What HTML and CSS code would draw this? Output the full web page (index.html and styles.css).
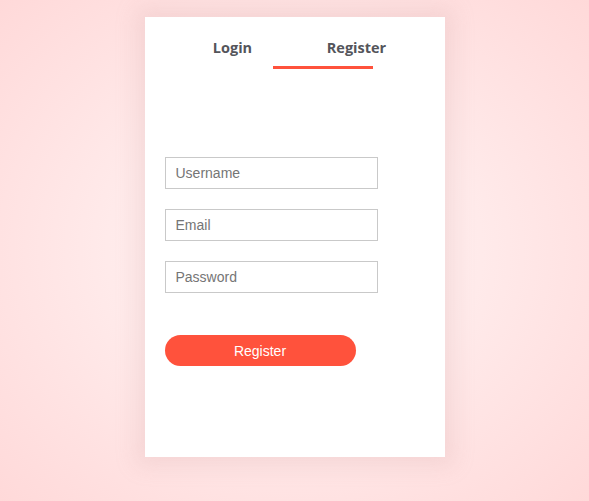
FILE: index.html
```html
<!DOCTYPE html>
<html>
<head>
<meta charset="utf-8">
<link rel="stylesheet" href="styles.css">
</head>
<body>
<div class="card">
  <div class="tabs">
    <div class="tab">Login</div>
    <div class="tab">Register</div>
  </div>
  <div class="indicator-row"><div class="indicator"></div></div>
  <form class="form">
    <input class="field" type="text" placeholder="Username">
    <input class="field" type="email" placeholder="Email">
    <input class="field" type="password" placeholder="Password">
    <button class="submit" type="button">Register</button>
  </form>
</div>
</body>
</html>
```
FILE: styles.css
```css
html, body { height: 100%; }
body {
  margin: 0;
  background: radial-gradient(ellipse at 50% 50%, #fff3f3 0%, #ffeaea 45%, #ffd9d9 100%);
  font-family: "Liberation Sans", Arial, sans-serif;
  overflow: hidden;
}
.card {
  width: 300px;
  height: 440px;
  margin: 17px auto 0;
  background: #fff;
  box-shadow: 0 0 20px 9px rgba(200, 150, 150, 0.18);
  box-sizing: border-box;
  padding-top: 21px;
}
.tabs {
  display: flex;
  height: 18px;
  align-items: center;
}
.tab {
  font-family: "Open Sans", sans-serif;
  font-weight: 700;
  font-size: 14.5px;
  color: #54555b;
  text-align: center;
}
.tab:first-child { width: 176px; }
.tab:last-child { width: 72px; }
.indicator-row { padding-left: 128px; margin-top: 10px; }
.indicator { width: 100px; height: 3px; background: #ff523c; }
.form {
  display: flex;
  flex-direction: column;
  align-items: flex-start;
  padding: 88px 0 0 20px;
  margin: 0;
}
.field {
  width: 213px;
  height: 32px;
  box-sizing: border-box;
  border: 1px solid #c9c9c9;
  padding: 0 10px;
  margin: 0 0 20px;
  font-family: "Liberation Sans", Arial, sans-serif;
  font-size: 14px;
  outline: none;
}
.field::placeholder { color: #757575; }
.submit {
  margin-top: 22px;
  width: 191px;
  height: 31px;
  border: none;
  border-radius: 16px;
  background: #ff523c;
  color: #fff;
  font-family: "Liberation Sans", Arial, sans-serif;
  font-size: 14px;
  padding: 0;
}
```
